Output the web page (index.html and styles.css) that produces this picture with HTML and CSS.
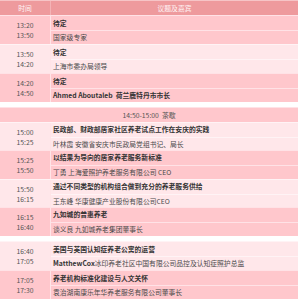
FILE: index.html
```html
<!DOCTYPE html>
<html lang="zh">
<head>
<meta charset="utf-8">
<link rel="stylesheet" href="styles.css">
</head>
<body>
<div class="schedule">
  <div class="head">
    <div class="h-time">时间</div>
    <div class="h-topic">议题及嘉宾</div>
  </div>

  <div class="group">
    <div class="row dark">
      <div class="time"><span>13:20</span><span>13:50</span></div>
      <div class="info"><div class="cell topic">待定</div><div class="cell">国家级专家</div></div>
    </div>
    <div class="row light">
      <div class="time"><span>13:50</span><span>14:20</span></div>
      <div class="info"><div class="cell topic">待定</div><div class="cell">上海市委办局领导</div></div>
    </div>
    <div class="row dark">
      <div class="time"><span>14:20</span><span>14:50</span></div>
      <div class="info"><div class="cell topic">待定</div><div class="cell topic">Ahmed Aboutaleb&nbsp; 荷兰鹿特丹市市长</div></div>
    </div>
  </div>

  <div class="group">
    <div class="break">14:50-15:00&nbsp; 茶歇</div>
    <div class="row light tight">
      <div class="time"><span>15:00</span><span>15:25</span></div>
      <div class="info"><div class="cell topic">民政部、财政部居家社区养老试点工作在安庆的实践</div><div class="cell">叶林霞 安徽省安庆市民政局党组书记、局长</div></div>
    </div>
    <div class="row dark tight">
      <div class="time"><span>15:25</span><span>15:50</span></div>
      <div class="info"><div class="cell topic">以结果为导向的居家养老服务新标准</div><div class="cell">丁勇 上海爱照护养老服务有限公司 CEO</div></div>
    </div>
    <div class="row light tight">
      <div class="time"><span>15:50</span><span>16:15</span></div>
      <div class="info"><div class="cell topic">通过不同类型的机构组合做到充分的养老服务供给</div><div class="cell">王东峰 华康健康产业股份有限公司CEO</div></div>
    </div>
    <div class="row dark tight">
      <div class="time"><span>16:15</span><span>16:40</span></div>
      <div class="info"><div class="cell topic">九如城的普惠养老</div><div class="cell">谈义良 九如城养老集团董事长</div></div>
    </div>
  </div>

  <div class="group">
    <div class="row light">
      <div class="time"><span>16:40</span><span>17:05</span></div>
      <div class="info"><div class="cell topic">美国与英国认知症养老公寓的运营</div><div class="cell"><b>MatthewCox</b>冰印养老社区中国有限公司品控及认知症照护总监</div></div>
    </div>
    <div class="row dark">
      <div class="time"><span>17:05</span><span>17:30</span></div>
      <div class="info"><div class="cell topic">养老机构标准化建设与人文关怀</div><div class="cell">袁治湖南康乐年华养老服务有限公司董事长</div></div>
    </div>
  </div>
</div>
</body>
</html>
```

FILE: styles.css
```css
html, body {
  margin: 0;
  padding: 0;
  background: #ffffff;
}
body {
  font-family: "Noto Sans CJK SC", "Noto Sans", "Liberation Sans", sans-serif;
  font-size: 6.8px;
  color: #3a3a3a;
  width: 298px;
  overflow: hidden;
}
.schedule {
  display: flex;
  flex-direction: column;
  gap: 5px;
}
.head {
  display: grid;
  grid-template-columns: 51px 1fr;
  height: 14px;
  border-top: 1px solid #f6c4c6;
  background: #ee9a9d;
  color: #fff4f5;
  line-height: 14px;
  text-align: center;
}
.h-time {
  border-right: 1px solid #f4b3b6;
}
.group {
  display: flex;
  flex-direction: column;
}
.head + .group {
  margin-top: -5px;
}
.row {
  display: grid;
  grid-template-columns: 51px 1fr;
  border-top: 1px solid #ffe2e6;
}
.dark {
  background: #ffc7cc;
}
.light {
  background: #ffe7ea;
  border-top-color: #fff3f5;
}
.time {
  display: flex;
  flex-direction: column;
  justify-content: center;
  align-items: center;
  line-height: 10px;
  color: #555;
  border-right: 1px solid #ffe4e7;
}
.info {
  display: flex;
  flex-direction: column;
}
.cell {
  height: 14px;
  line-height: 14px;
  padding-left: 2px;
  white-space: nowrap;
  overflow: hidden;
  color: #4a4a4a;
}
.cell + .cell {
  height: 13px;
  line-height: 13px;
  border-top: 1px solid #ffe2e6;
}
.light .cell + .cell {
  border-top-color: #fff3f5;
}
.tight .cell {
  height: 13.7px;
  line-height: 13.7px;
}
.tight .cell + .cell {
  height: 12.8px;
  line-height: 12.8px;
}
.topic {
  font-weight: bold;
  color: #333;
}
.cell b {
  font-weight: bold;
  color: #333;
}
.break {
  height: 14px;
  line-height: 14px;
  border-top: 1px solid #ffe2e6;
  background: #ffc7cc;
  text-align: center;
  color: #555;
}
```
